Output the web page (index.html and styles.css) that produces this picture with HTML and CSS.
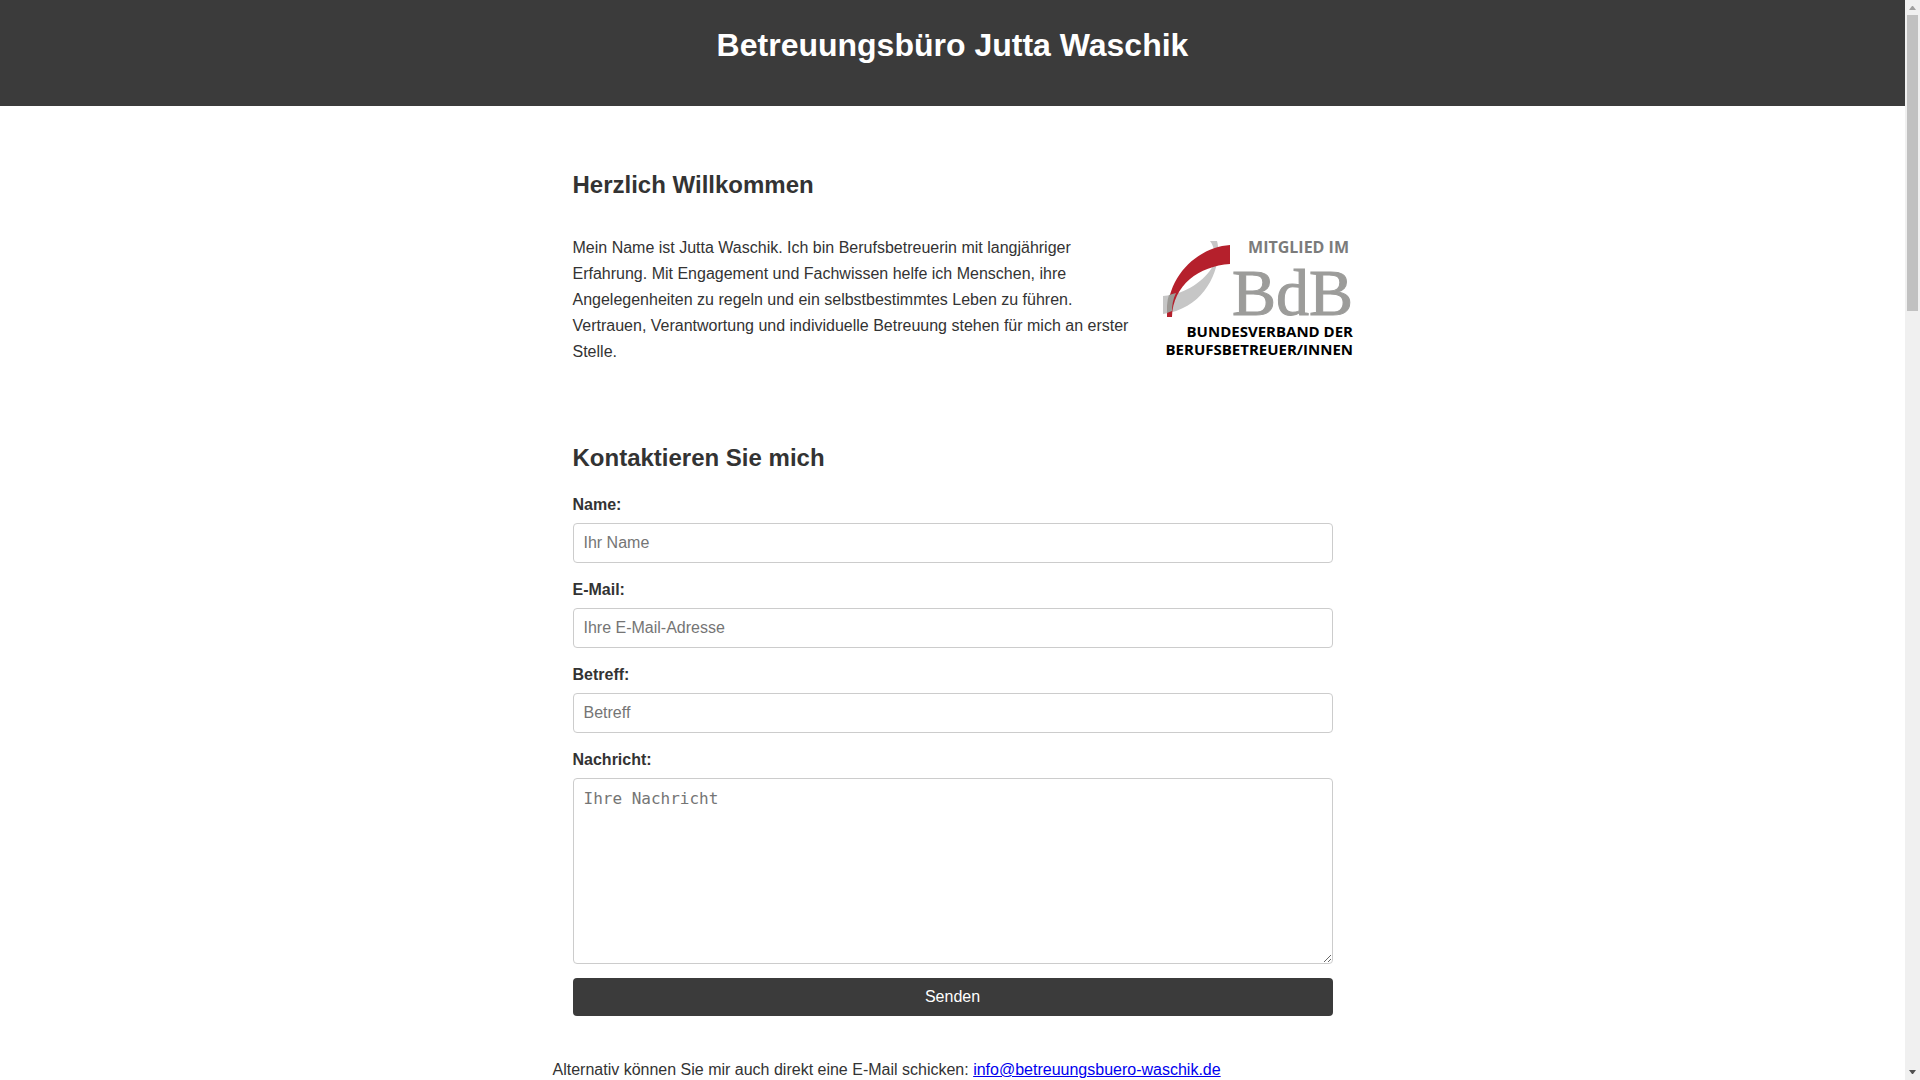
FILE: index.html
```
<!DOCTYPE html>
<html lang="de">
<head>
    <meta charset="UTF-8">
    <meta name="viewport" content="width=device-width, initial-scale=1.0">
    <title>Betreuungsbüro Jutta Waschik</title>
    <link rel="stylesheet" href="styles.css">
</head>
<body>
<div class="page">
    <header class="header">
        <h1>Betreuungsbüro Jutta Waschik</h1>
    </header>
    <main class="content">
        <section class="welcome">
            <h2>Herzlich Willkommen</h2>
            <div class="intro">
                <p>Mein Name ist Jutta Waschik. Ich bin Berufsbetreuerin mit langjähriger Erfahrung. Mit Engagement und Fachwissen helfe ich Menschen, ihre Angelegenheiten zu regeln und ein selbstbestimmtes Leben zu führen. Vertrauen, Verantwortung und individuelle Betreuung stehen für mich an erster Stelle.</p>
                <svg class="logo" viewBox="0 -5 190 125" role="img" aria-label="Mitglied im BdB">
                    <path fill="#c6c6c6" d="M47 1H54C60 22 46 68 0 74V56C24 54 42 40 50 26C53 14 51 6 47 1Z"/>
                    <path fill="#b5202c" d="M67 5C38 7 4 32 4 77H9C10 45 36 26 67 24Z"/>
                    <path fill="#9c9a96" d="M6 55L13 53C10 59 9 65 9 71L4 73C4 66 4 60 6 55Z"/>
                    <text class="logo-top" x="186" y="13">MITGLIED IM</text>
                    <text class="logo-bdb" x="190" y="75">BdB</text>
                    <text class="logo-name" x="190" y="97">BUNDESVERBAND DER</text>
                    <text class="logo-name" x="190" y="115">BERUFSBETREUER/INNEN</text>
                </svg>
            </div>
        </section>
        <section class="contact">
            <h2>Kontaktieren Sie mich</h2>
            <form>
                <label for="name">Name:</label>
                <input type="text" id="name" name="name" placeholder="Ihr Name">
                <label for="email">E-Mail:</label>
                <input type="email" id="email" name="email" placeholder="Ihre E-Mail-Adresse">
                <label for="subject">Betreff:</label>
                <input type="text" id="subject" name="subject" placeholder="Betreff">
                <label for="message">Nachricht:</label>
                <textarea id="message" name="message" placeholder="Ihre Nachricht"></textarea>
                <button type="submit">Senden</button>
            </form>
        </section>
        <p>Alternativ können Sie mir auch direkt eine E-Mail schicken: <a href="mailto:info@betreuungsbuero-waschik.de">info@betreuungsbuero-waschik.de</a></p>
    </main>
</div>
<div class="scrollbar">
    <svg class="arrow" viewBox="0 0 15 15"><path fill="#a0a0a0" d="M4 10L7 6H8L11 10Z"/></svg>
    <div class="thumb"></div>
    <svg class="arrow" viewBox="0 0 15 15"><path fill="#505050" d="M4 5H11L8 9H7Z"/></svg>
</div>
</body>
</html>
```
FILE: styles.css
```
*{
    margin:0;
    padding:0;
    box-sizing:border-box;
}
body{
    display:flex;
    height:100vh;
    overflow:hidden;
    font-family:"Liberation Sans", Arial, sans-serif;
    font-size:16px;
    line-height:26px;
    color:#333;
    background:#fff;
}
.page{
    flex:1;
    overflow:hidden;
}
.header{
    padding:20px 0 35px;
    text-align:center;
    color:#fff;
    background:#3b3b3b;
}
h1{
    font-size:32px;
    line-height:51px;
}
h2{
    font-size:24px;
    line-height:38px;
}
.content{
    max-width:800px;
    margin:0 auto;
    padding-top:60px;
}
.welcome{
    padding-left:20px;
}
.intro{
    display:flex;
    gap:20px;
    padding-top:31px;
}
.intro p{
    flex:1;
}
.logo{
    width:190px;
    height:125px;
    overflow:visible;
}
.logo text{
    font-family:"Open Sans", "Noto Sans", sans-serif;
    font-weight:bold;
    text-anchor:end;
}
.logo .logo-top{
    font-size:16px;
    fill:#7b7b7b;
}
.logo .logo-bdb{
    font-family:"Liberation Serif", serif;
    font-size:66px;
    font-weight:normal;
    fill:#9c9c9a;
    stroke:#9c9c9a;
    stroke-width:1px;
}
.logo .logo-name{
    font-size:15px;
    fill:#000;
}
.contact{
    padding:74px 20px 41px;
}
form{
    display:flex;
    flex-direction:column;
    padding-top:15px;
}
label{
    margin-bottom:5px;
    font-weight:bold;
}
input,
textarea{
    width:100%;
    margin-bottom:14px;
    padding:10px;
    border:1px solid #ccc;
    border-radius:4px;
    font-size:16px;
    background:#fff;
}
input{
    height:40px;
    font-family:inherit;
}
textarea{
    height:186px;
    font-family:"DejaVu Sans Mono", monospace;
    resize:vertical;
}
button{
    height:38px;
    border:none;
    border-radius:4px;
    font-family:inherit;
    font-size:16px;
    color:#fff;
    background:#3b3b3b;
    cursor:pointer;
}
a{
    color:#0000ee;
}
.scrollbar{
    display:flex;
    flex-direction:column;
    width:15px;
    background:#f0f0f0;
}
.arrow{
    width:15px;
    height:15px;
}
.thumb{
    height:296px;
    margin:0 2px auto;
    background:#c1c1c1;
}
```
